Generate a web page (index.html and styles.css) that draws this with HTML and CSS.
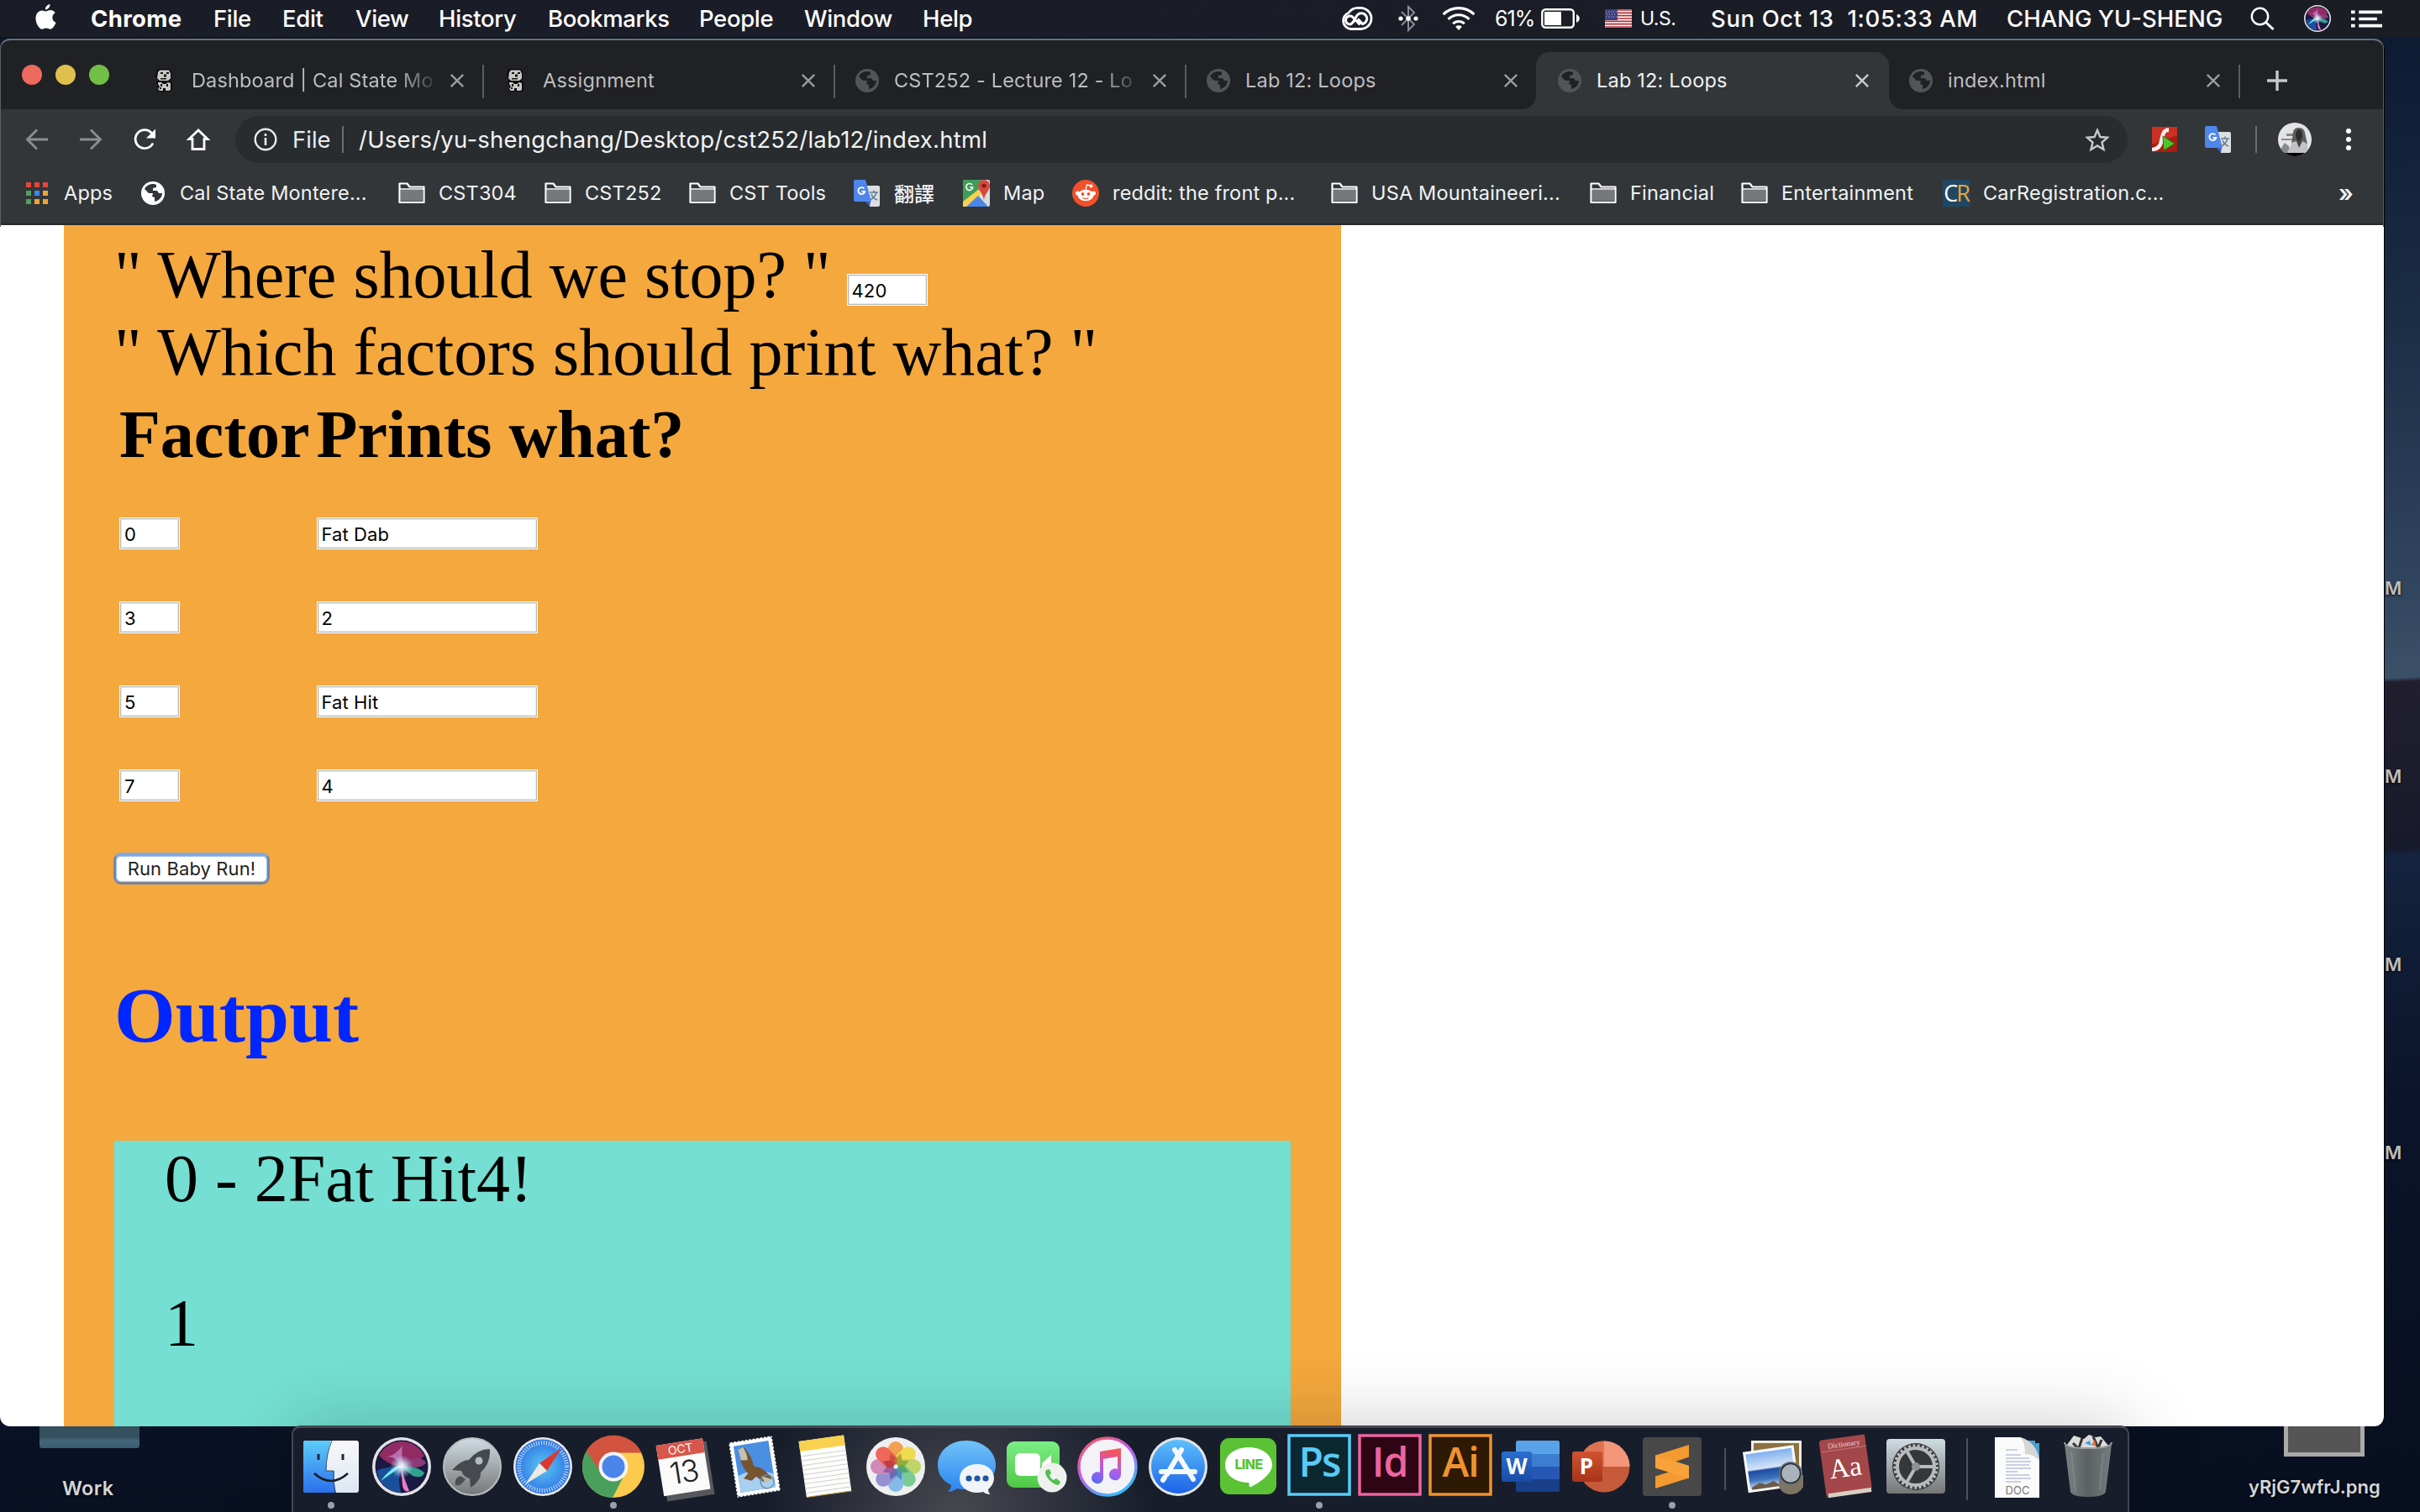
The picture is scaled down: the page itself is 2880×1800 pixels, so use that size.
FILE: index.html
```html
<!DOCTYPE html>
<html lang="en">
<head>
<meta charset="utf-8">
<title>Lab 12: Loops</title>
<link rel="stylesheet" href="styles.css">
</head>
<body>
<svg class="defs" width="0" height="0" aria-hidden="true">
  <defs>
    <symbol id="globe" viewBox="0 0 28 28"><circle cx="14" cy="14" r="14" fill="currentColor"/><path class="cut" d="M14 3C10 3 6 5 4 9l5 5h5l-1 4 3 1v5c5-1 9-5 9-10h-4l-2-3h-5V8l4-1V4c-1-1-3-1-4-1z"/></symbol>
    <symbol id="folder" viewBox="0 0 32 32"><path d="M1.500 27V4.500h9l3 4h17V27z" fill="none" stroke="#fff" stroke-width="2.200" stroke-linejoin="round"/><path d="M3 12h26.500v13.500H3z" fill="#77787a"/><path d="M1.500 11h29" stroke="#fff" stroke-width="1.500"/></symbol>
    <symbol id="translate" viewBox="0 0 32 32"><path d="M13 7h16a2 2 0 0 1 2 2v21a2 2 0 0 1-2 2H19z" fill="#dcdfe2"/><path d="M14 26h6l-1 6z" fill="#3b5bc0"/><path d="M2 0h12l7 26H2a2 2 0 0 1-2-2V2a2 2 0 0 1 2-2z" fill="#4f86ec"/><path d="M12.500 10.500a4 4 0 1 0 .8 3.500H9.500" fill="none" stroke="#fff" stroke-width="1.800"/><path d="M19 15h10M24 12.500V15M27 15c-1 4-4 7-7 9M21 17c1 3 4 6 7 7" fill="none" stroke="#607d8b" stroke-width="1.500"/></symbol>
    <symbol id="mascot" viewBox="0 0 28 28"><path d="M6 0h13l3 3v9l-2 2 3 2v9l-3 2H9l-4-2 1-4-2-5 2-3-3-4 1-6z" fill="#0a0a0a"/><path d="M8 1.500h11l2 4v6l-3 2.500H8L5 11l1-7zM6 16h4l2 2h3l3-2 3 1v8l-2 1h-4v-3h-3v3H8l-2-2 2-3-2-3z" fill="#c9c6c3"/><path d="M9 4h3v2H9zM16 4h3v2h-3zM13 6.500h3v3h-3zM9 11h7v1.500H9zM9 18h2v3H9zM16 18h2v3h-2zM8 22h2v2H8z" fill="#111"/></symbol>
    <symbol id="close" viewBox="0 0 20 20"><path d="M2 2l16 16M18 2L2 18" stroke="currentColor" stroke-width="2.600" fill="none"/></symbol>
    <linearGradient id="gBlue" x2="0" y2="1"><stop stop-color="#5cc0fb"/><stop offset="1" stop-color="#1c62e8"/></linearGradient>
    <linearGradient id="gBubble" x2="0" y2="1"><stop stop-color="#72c3f8"/><stop offset="1" stop-color="#2a84f0"/></linearGradient>
    <linearGradient id="gFinder" x2="0" y2="1"><stop stop-color="#5ccdfb"/><stop offset="1" stop-color="#2c70ea"/></linearGradient>
    <linearGradient id="gFace" x2="0" y2="1"><stop stop-color="#f8f8fa"/><stop offset="1" stop-color="#dde7f2"/></linearGradient>
    <linearGradient id="gGreen" x2="0" y2="1"><stop stop-color="#7bee85"/><stop offset="1" stop-color="#4fc846"/></linearGradient>
    <linearGradient id="gMetal" x2="0" y2="1"><stop stop-color="#cfdde3"/><stop offset="1" stop-color="#767676"/></linearGradient>
    <linearGradient id="gNote" x1=".2" x2="0" y2="1"><stop stop-color="#f4545c"/><stop offset=".5" stop-color="#b45bea"/><stop offset="1" stop-color="#4f6df5"/></linearGradient>
    <linearGradient id="gTunes" x1="0" y1="0" x2=".6" y2="1"><stop stop-color="#fb5b4e"/><stop offset=".5" stop-color="#c65ce8"/><stop offset="1" stop-color="#3fb8fb"/></linearGradient>
    <linearGradient id="gTrash"><stop stop-color="#7d8284"/><stop offset=".5" stop-color="#5b6063"/><stop offset="1" stop-color="#777c7f"/></linearGradient>
    <linearGradient id="gSea" x2="0" y2="1"><stop stop-color="#7fb0ef"/><stop offset=".45" stop-color="#d5e4f7"/><stop offset=".5" stop-color="#1f4ba0"/><stop offset=".75" stop-color="#3d74c0"/><stop offset="1" stop-color="#e3eaf0"/></linearGradient>
    <linearGradient id="gWord" x2="0" y2="1"><stop stop-color="#2a6fd0"/><stop offset="1" stop-color="#1a4ba4"/></linearGradient>
    <linearGradient id="gPpt" x2="0" y2="1"><stop stop-color="#d0532f"/><stop offset="1" stop-color="#a8341a"/></linearGradient>
    <radialGradient id="gSafari"><stop stop-color="#5cc8f0"/><stop offset="1" stop-color="#2f75e6"/></radialGradient>
    <radialGradient id="gGlow"><stop stop-color="#fff"/><stop offset=".4" stop-color="#d8f0ff" stop-opacity=".7"/><stop offset="1" stop-color="#8fd8ff" stop-opacity="0"/></radialGradient>
    <symbol id="siri" viewBox="0 0 70 70"><circle cx="35" cy="35" r="35" fill="#e4e2e6"/><circle cx="35" cy="35" r="31.500" fill="#191a42"/><path d="M8 22A30 30 0 0 1 62 22Q50 34 35 35Q20 34 8 22z" fill="#b0306c" opacity=".8"/><path d="M5 40Q10 64 34 66Q30 50 34 36Q18 34 5 40z" fill="#1b62b8" opacity=".75"/><path d="M35 34Q54 18 64 30Q60 38 35 36z" fill="#8d3a78"/><path d="M35 35Q54 34 62 42Q60 50 48 46z" fill="#36c3a0" opacity=".8"/><path d="M33 36L10 52Q22 36 33 33z" fill="#6cf0f2"/><path d="M34 34Q38 50 44 64Q38 66 36 58z" fill="#ef79c8"/><path d="M33 35Q28 20 15 24Q28 22 36 10Q34 24 38 32z" fill="#d59ae0" opacity=".6"/><circle cx="35" cy="35" r="14" fill="url(#gGlow)"/></symbol>
  </defs>
</svg>

<header class="menubar">
  <svg class="apple" viewBox="0 0 26 32"><path d="M18 1c.4 3-2.500 6.500-5.500 6.500C12 4.500 15 1.300 18 1zM13 9.500c1.500 0 3-1.500 5.500-1.500 2 0 4.300 1 5.700 3.200-5 3-4 9.800.9 11.600C23.500 27 21 30.700 18.300 30.700c-1.900 0-2.600-1.200-4.900-1.200s-3.100 1.200-4.900 1.200C5.200 30.700 1 24 1 18c0-6 3.800-9.500 7.500-9.500 2 0 3.300 1 4.500 1z" fill="#fff"/></svg>
  <nav class="menus"><b>Chrome</b><span>File</span><span>Edit</span><span>View</span><span>History</span><span>Bookmarks</span><span>People</span><span>Window</span><span>Help</span></nav>
  <div class="status">
    <svg class="cc" viewBox="0 0 38 28"><path d="M22 1.500a13 12.500 0 0 1 14.500 12.500A12.500 12.500 0 0 1 24 26.500H12A10 10 0 0 1 9.500 7.200A14 14 0 0 1 22 1.500z" fill="none" stroke="#fff" stroke-width="2.800"/><path d="M20.500 14.500l5.500 6a6.500 6.500 0 1 0-7-9.500c-3 6-5 10-8 10a5 5 0 1 1 3-9l9 9.500" fill="none" stroke="#fff" stroke-width="3"/></svg>
    <svg class="bt" viewBox="0 0 24 32"><path d="M4 8l15 15-7 7V2l7 7L4 24" fill="none" stroke="#8b8d93" stroke-width="2"/><circle cx="3" cy="16" r="2.600" fill="#fff"/><circle cx="12" cy="16" r="2.800" fill="#fff"/><circle cx="21" cy="16" r="2.600" fill="#fff"/></svg>
    <svg class="wifi" viewBox="0 0 42 30"><g fill="none" stroke="#fff" stroke-width="3.200"><path d="M2 10.500a27 27 0 0 1 38 0M8 16.500a18.500 18.500 0 0 1 26 0M14 22a10 10 0 0 1 14 0"/></g><path d="M21 30l-4-4.500a6 6 0 0 1 8 0z" fill="#fff"/></svg>
    <span class="pct">61%</span>
    <svg class="batt" viewBox="0 0 46 24"><rect x="1.300" y="1.300" width="37.500" height="21.400" rx="4" fill="none" stroke="#fff" stroke-width="2.400"/><rect x="4" y="4" width="20" height="16" fill="#fff"/><path d="M42 7c5 2 5 8 0 10z" fill="#fff"/></svg>
    <svg class="flag" viewBox="0 0 32 22"><path fill="#fff" d="M0 0h32v22H0z"/><path stroke="#b22c36" stroke-width="1.700" d="M0 1h32M0 4.300h32M0 7.700h32M0 11h32M0 14.300h32M0 17.700h32M0 21h32"/><path fill="#3c4180" d="M0 0h15v13H0z"/><path stroke="#b9bcd8" stroke-dasharray="1 2" d="M1 3h13M2 6h12M1 9h13"/></svg>
    <span class="us">U.S.</span>
    <span class="clock">Sun Oct 13&nbsp; 1:05:33 AM</span>
    <span class="user">CHANG YU-SHENG</span>
    <svg class="search" viewBox="0 0 30 28"><circle cx="11.500" cy="11.500" r="9.700" fill="none" stroke="#fff" stroke-width="2.400"/><path d="M18.500 18.500l9 8.500" stroke="#fff" stroke-width="3"/></svg>
    <svg class="siri-sm"><use href="#siri"/></svg>
    <svg class="list" viewBox="0 0 36 20"><path stroke="#fff" stroke-width="3.600" d="M0 2h4.500M9 2h27M0 10h4.500M9 10h21M0 18h4.500M9 18h27"/></svg>
  </div>
</header>

<span class="dm dm1">M</span><span class="dm dm2">M</span><span class="dm dm3">M</span><span class="dm dm4">M</span>
<div class="desk-folder"></div><span class="desk-label work">Work</span>
<div class="desk-thumb"></div><span class="desk-label png">yRjG7wfrJ.png</span>

<main class="window">
  <div class="tabstrip">
    <div class="lights"><i class="red"></i><i class="yellow"></i><i class="green"></i></div>
    <div class="tab"><svg class="fav"><use href="#mascot"/></svg><span class="fade">Dashboard | Cal State Mo</span><svg class="x"><use href="#close"/></svg></div>
    <div class="tab"><svg class="fav"><use href="#mascot"/></svg><span>Assignment</span><svg class="x"><use href="#close"/></svg></div>
    <div class="tab"><svg class="fav"><use href="#globe"/></svg><span class="fade">CST252 - Lecture 12 - Lo</span><svg class="x"><use href="#close"/></svg></div>
    <div class="tab nosep"><svg class="fav"><use href="#globe"/></svg><span>Lab 12: Loops</span><svg class="x"><use href="#close"/></svg></div>
    <div class="tab active"><svg class="fav"><use href="#globe"/></svg><span>Lab 12: Loops</span><svg class="x"><use href="#close"/></svg></div>
    <div class="tab"><svg class="fav"><use href="#globe"/></svg><span>index.html</span><svg class="x"><use href="#close"/></svg></div>
    <svg class="plus" viewBox="0 0 24 24"><path d="M12 0v24M0 12h24" stroke="#c6c8ca" stroke-width="3.400"/></svg>
  </div>
  <div class="toolbar">
    <svg viewBox="0 0 28 28" class="nav dim"><path d="M27 14H3M14 2.500L2.500 14 14 25.500"/></svg>
    <svg viewBox="0 0 28 28" class="nav dim"><path d="M1 14h24M14 2.500L25.500 14 14 25.500"/></svg>
    <svg viewBox="0 0 28 28" class="nav"><path d="M24 18.500A11 11 0 1 1 22.500 6.500"/><path d="M27 1.500v11H16z" class="solid"/></svg>
    <svg viewBox="0 0 28 28" class="nav"><path d="M14 3L3 13.500h4V25.500h14V13.500h4z"/></svg>
    <div class="omnibox">
      <svg class="info" viewBox="0 0 28 28"><circle cx="14" cy="14" r="12.300" fill="none" stroke="#e8eaed" stroke-width="2.400"/><path d="M14 12v9M14 7v3" stroke="#e8eaed" stroke-width="2.600"/></svg>
      <span class="scheme">File</span><i class="bar"></i><span class="url">/Users/yu-shengchang/Desktop/cst252/lab12/index.html</span>
      <svg class="star" viewBox="0 0 30 28"><path d="M15 3l3.400 8 8.600.8-6.500 5.700 2 8.500L15 21.500 7.500 26l2-8.500L3 11.800l8.600-.8z" fill="none" stroke="#c8cacc" stroke-width="2.400"/></svg>
    </div>
    <svg class="ext" viewBox="0 0 32 32"><rect x="1" y="1" width="30" height="30" rx="2" fill="#a81d14"/><path d="M1 1h30v10L1 22z" fill="#d8392b" opacity=".7"/><path d="M21 2c-9 1-9 8-11 15-1 6-4 8-9 9v4c10 0 12-6 14-13 1-7 2-10 6-10z" fill="#f6eeee"/><path d="M14 12l14 9-13 8z" fill="#4fc52a" stroke="#1e7a0c"/></svg>
    <svg class="ext tr"><use href="#translate"/></svg>
    <i class="bar tb"></i>
    <svg class="avatar" viewBox="0 0 40 40"><clipPath id="av"><circle cx="20" cy="20" r="20"/></clipPath><g clip-path="url(#av)"><path fill="#e4e4e6" d="M0 0h40v40H0z"/><path fill="#8a8a8c" d="M4 19h14v2H4zM10 13h8v3h-8zM0 36l8-12 5 4 2 12H0z"/><path fill="#5e5d5f" d="M18 11q1-5 7-5t7 6l3 14-4-3H18l-2 2z"/><ellipse cx="25" cy="15" rx="4" ry="7" fill="#2f2d2e"/><path d="M10 37l8-14 5-1 3 4 3-4 5 3 4 13z" fill="#c2c2c4"/><path d="M22 22l3 8 4-8z" fill="#444"/><path d="M0 36h40v4H0z" fill="#000"/></g></svg>
    <svg class="dots" viewBox="0 0 6 26"><g fill="#fff"><circle cx="3" cy="3" r="3"/><circle cx="3" cy="13" r="3"/><circle cx="3" cy="23" r="3"/></g></svg>
  </div>
  <div class="bookmarks">
    <a><svg viewBox="0 0 32 32"><g fill="#e5473b"><path d="M3 3h6v6H3zM13 3h6v6h-6zM23 3h6v6h-6z"/></g><path d="M3 13h6v6H3zM3 23h6v6H3z" fill="#4fa060"/><path d="M13 13h6v6h-6z" fill="#3f86f0"/><path d="M23 13h6v6h-6zM13 23h6v6h-6zM23 23h6v6h-6z" fill="#eda634"/></svg>Apps</a>
    <a><svg viewBox="-2 -2 32 32"><circle cx="14" cy="14" r="14" fill="#fff"/><path fill="#323639" d="M14 3C10 3 6 5 4 9l5 5h5l-1 4 3 1v5c5-1 9-5 9-10h-4l-2-3h-5V8l4-1V4c-1-1-3-1-4-1z"/></svg>Cal State Montere...</a>
    <a><svg><use href="#folder"/></svg>CST304</a>
    <a><svg><use href="#folder"/></svg>CST252</a>
    <a><svg><use href="#folder"/></svg>CST Tools</a>
    <a><svg><use href="#translate"/></svg><span class="cjk">翻譯</span></a>
    <a><svg viewBox="0 0 32 32"><rect width="32" height="32" rx="2" fill="#dadbdc"/><path d="M0 2a2 2 0 0 1 2-2h20L18 14 0 30z" fill="#3f9d5a"/><path d="M0 26l18-14 4 5L4 32H0z" fill="#fbd14b"/><path d="M4 32l14-13 12 13z" fill="#4b86ec"/><path d="M25 24C24 16 18 13 18 7a7 7 0 0 1 14 0c0 6-6 9-7 17z" fill="#d8483a"/><circle cx="25" cy="7" r="2.600" fill="#7a211a"/><path d="M11 6a4 4 0 1 0 .8 3H8" fill="none" stroke="#fff" stroke-width="1.600"/></svg>Map</a>
    <a><svg viewBox="0 0 32 32"><circle cx="16" cy="16" r="16" fill="#f1512a"/><ellipse cx="16" cy="18.500" rx="9.500" ry="6.700" fill="#fff"/><circle cx="6.500" cy="16" r="2.500" fill="#fff"/><circle cx="25.500" cy="16" r="2.500" fill="#fff"/><path d="M16 12l1.500-6 5 1" stroke="#fff" stroke-width="1.300" fill="none"/><circle cx="22.500" cy="7.500" r="2" fill="#fff"/><circle cx="12.500" cy="17" r="1.900" fill="#f1512a"/><circle cx="19.500" cy="17" r="1.900" fill="#f1512a"/><path d="M12.500 21.500q3.500 2.500 7 0" stroke="#f1512a" stroke-width="1.200" fill="none"/></svg>reddit: the front p...</a>
    <a><svg><use href="#folder"/></svg>USA Mountaineeri...</a>
    <a><svg><use href="#folder"/></svg>Financial</a>
    <a><svg><use href="#folder"/></svg>Entertainment</a>
    <a><span class="cr">C<em>R</em></span>CarRegistration.c...</a>
    <a class="more">»</a>
  </div>
  <section class="viewport">
    <div class="lab">
      <div class="line">" Where should we stop? " <span class="field stop">420</span></div>
      <div class="line">" Which factors should print what? "</div>
      <table>
        <tr><th>Factor</th><th>Prints what?</th></tr>
        <tr><td><span class="field num">0</span></td><td><span class="field word">Fat Dab</span></td></tr>
        <tr><td><span class="field num">3</span></td><td><span class="field word">2</span></td></tr>
        <tr><td><span class="field num">5</span></td><td><span class="field word">Fat Hit</span></td></tr>
        <tr><td><span class="field num">7</span></td><td><span class="field word">4</span></td></tr>
      </table>
      <div class="line"><button>Run Baby Run!</button></div>
      <h3>Output</h3>
      <div class="out"><p>0 - 2Fat Hit4!</p><p>1</p></div>
    </div>
  </section>
</main>

<footer class="dock">
  <svg viewBox="0 0 84 100"><rect x="9" y="15" width="66" height="62" rx="3" fill="url(#gFace)"/><path d="M12 15h30q-6 16-6 36h10q-1 14 2 26H12a3 3 0 0 1-3-3V18a3 3 0 0 1 3-3z" fill="url(#gFinder)"/><path d="M43 15q-7 16-7 36h9q-1 14 2 26" fill="none" stroke="#394b63" stroke-width="1"/><path d="M27 31v7M56 31v7" stroke="#1c2836" stroke-width="3"/><path d="M22 54q20 18 40 0" fill="none" stroke="#1c1c22" stroke-width="2.500"/><circle cx="42" cy="92" r="4"/></svg>
  <svg viewBox="0 0 84 100"><use href="#siri" x="7" y="11" width="70" height="70"/></svg>
  <svg viewBox="0 0 84 100"><circle cx="42" cy="46" r="34" fill="url(#gMetal)" stroke="#b9bec1" stroke-width="2"/><path d="M63 25Q48 25 38 38Q29 38 18 50l11 1q3 8 10 9l1 11q13-9 12-18Q64 42 63 25z" fill="#46494d"/><circle cx="50" cy="39" r="4.500" fill="#b5bdc1"/><path d="M28 57q-8 3-6 11q6 2 12-7z" fill="#4c4e50"/></svg>
  <svg viewBox="0 0 84 100"><circle cx="42" cy="46" r="35" fill="#ecebe9"/><circle cx="42" cy="46" r="32.500" fill="url(#gSafari)"/><circle cx="42" cy="46" r="28.500" fill="none" stroke="#cfe7fb" stroke-width="5" stroke-dasharray="1 2"/><path d="M64 24L47 51l-9-9z" fill="#dc3830"/><path d="M21 67l17-25 9 9z" fill="#ece9e7"/></svg>
  <svg viewBox="0 0 84 100"><circle cx="42" cy="46" r="37" fill="#fccb4e"/><path d="M42 46L10 27.500A37 37 0 0 0 41 83L54 58z" fill="#49a05c"/><path d="M10 27.500A37 37 0 0 1 75.500 29.500H42L30 58z" fill="#d2533f"/><circle cx="42" cy="46" r="17.500" fill="#f3f4f5"/><circle cx="42" cy="46" r="13.500" fill="#4b85ec"/><circle cx="42" cy="92" r="4"/></svg>
  <svg viewBox="0 0 84 100"><g transform="rotate(-9 42 46)"><path d="M16 20h57v64H16z" fill="#55585c"/><path d="M13 16h56v61H13z" fill="#fafafa"/><path d="M13 16h56v17H13z" fill="#d9564b"/><text x="41" y="29.500" class="oct">OCT</text><text x="41" y="65" class="day">13</text></g></svg>
  <svg viewBox="0 0 84 100"><g transform="rotate(-9 42 46)"><rect x="16" y="13" width="52" height="66" fill="#fff"/><rect x="16" y="13" width="52" height="66" fill="none" stroke="#171c2a" stroke-width="2" stroke-dasharray="1.500 3"/><path d="M21 18h42v56H21z" fill="#4a8fe2"/><path d="M21 54q20-8 42 4v16H21z" fill="#a9cff0"/><path d="M27 22l6-1q8 12 8 24l8 4q10 9 11 15l-10 2-8-8-6 4-9-4 6-5Q24 40 27 22z" fill="#76542f"/><path d="M26 23l6-2q4 10 3 16l-8-1zM48 58l12 6-9 3z" fill="#c5bfb4"/><circle cx="54" cy="66" r="8" fill="none" stroke="#6a8fb5" stroke-width="1.500"/></g></svg>
  <svg viewBox="0 0 84 100"><g transform="rotate(-8 42 46)"><path d="M15 12h54v67H15z" fill="#fdfdfb"/><path d="M15 12h54v12H15z" fill="#fad04f"/><path d="M15 30h54M15 35.500h54M15 41h54M15 46.500h54M15 52h54M15 57.500h54M15 63h54M15 68.500h54M15 74h54" stroke="#cfcfcf" stroke-width="1"/><path d="M15 79h54" stroke="#bb923b"/></g></svg>
  <svg viewBox="0 0 84 100"><circle cx="42" cy="46" r="35" fill="#efeff0"/><g opacity=".88"><rect x="33" y="16" width="18" height="29" rx="9" fill="#f3963a"/><rect x="33" y="16" width="18" height="29" rx="9" fill="#efd93b" transform="rotate(45 42 46)"/><rect x="33" y="16" width="18" height="29" rx="9" fill="#b9d257" transform="rotate(90 42 46)"/><rect x="33" y="16" width="18" height="29" rx="9" fill="#6cc487" transform="rotate(135 42 46)"/><rect x="33" y="16" width="18" height="29" rx="9" fill="#75b3e6" transform="rotate(180 42 46)"/><rect x="33" y="16" width="18" height="29" rx="9" fill="#8a84cf" transform="rotate(225 42 46)"/><rect x="33" y="16" width="18" height="29" rx="9" fill="#cc7bb2" transform="rotate(270 42 46)"/><rect x="33" y="16" width="18" height="29" rx="9" fill="#ee5547" transform="rotate(315 42 46)"/></g><g opacity=".6"><path d="M42 46l-5-8 5-9 5 9z" fill="#c0392b" transform="rotate(-22 42 46)"/><path d="M42 46l-5-8 5-9 5 9z" fill="#9a7a20" transform="rotate(22 42 46)"/><path d="M42 46l-5-8 5-9 5 9z" fill="#7d8f20" transform="rotate(67 42 46)"/><path d="M42 46l-5-8 5-9 5 9z" fill="#3f8f4a" transform="rotate(112 42 46)"/><path d="M42 46l-5-8 5-9 5 9z" fill="#2b7d8a" transform="rotate(157 42 46)"/><path d="M42 46l-5-8 5-9 5 9z" fill="#4455a8" transform="rotate(202 42 46)"/><path d="M42 46l-5-8 5-9 5 9z" fill="#7a458f" transform="rotate(247 42 46)"/><path d="M42 46l-5-8 5-9 5 9z" fill="#9c2440" transform="rotate(292 42 46)"/></g><circle cx="42" cy="46" r="2.500" fill="#fff"/></svg>
  <svg viewBox="0 0 84 100"><path d="M42 15c20 0 35 13 35 29S62 73 42 73c-4 0-8 0-11-1q-5 4-11 4q4-4 4-8Q8 60 8 44C8 28 22 15 42 15z" fill="url(#gBubble)"/><path d="M55 43c12 0 20 7 20 17q0 7-7 13q0 4 3 6q-6 0-9-3q-3 1-7 1c-12 0-21-7-21-17s9-17 21-17z" fill="#f1f4f8"/><g fill="#1f56a5"><circle cx="45" cy="60" r="3.600"/><circle cx="55" cy="60" r="3.600"/><circle cx="65" cy="60" r="3.600"/></g></svg>
  <svg viewBox="0 0 84 100"><rect x="6" y="16" width="63" height="55" rx="9" fill="url(#gGreen)"/><rect x="16" y="30" width="30" height="27" rx="6" fill="#fff"/><path d="M48 42l11-10v24L48 47z" fill="#fff"/><circle cx="60" cy="59" r="17.500" fill="#eff1ef"/><path d="M53 50q-3 4 3 11t12 7l2-4-5-4-3 2q-4-2-5-6l2-2-2-5z" fill="#4fc04f"/></svg>
  <svg viewBox="0 0 84 100"><circle cx="42" cy="46" r="34" fill="#f3f2f7" stroke="url(#gTunes)" stroke-width="3.500"/><path d="M33 28l25-4v31a7 7 0 1 1-4-6V34l-17 3v22a7 7 0 1 1-4-6z" fill="url(#gNote)"/></svg>
  <svg viewBox="0 0 84 100"><circle cx="42" cy="46" r="35" fill="#e4e5e8"/><circle cx="42" cy="46" r="32" fill="url(#gBlue)"/><g stroke="#f6f9fc" stroke-width="6" stroke-linecap="round" fill="none"><path d="M46 26L29 55M38 26l22 35M22 52h40M26 59l-2 3"/></g></svg>
  <svg viewBox="0 0 84 100"><rect x="8" y="12" width="67" height="67" rx="11" fill="#5bc236"/><path d="M42 23c16 0 28 9 28 21 0 10-13 20-25 26-3 1-2-3-3-5-16 0-28-9-28-21s12-21 28-21z" fill="#fff"/><text x="42" y="48.500" class="linet">LINE</text></svg>
  <svg viewBox="0 0 84 100"><rect x="6" y="9" width="72" height="70" fill="#0b2730" stroke="#58cbf7" stroke-width="3.500"/><text x="42" y="58" class="adobe ps">Ps</text><circle cx="42" cy="92" r="4"/></svg>
  <svg viewBox="0 0 84 100"><rect x="6" y="9" width="72" height="70" fill="#2d0513" stroke="#ee63a0" stroke-width="3.500"/><text x="42" y="58" class="adobe id">Id</text></svg>
  <svg viewBox="0 0 84 100"><rect x="6" y="9" width="72" height="70" fill="#2e1905" stroke="#f0922e" stroke-width="3.500"/><text x="42" y="58" class="adobe ai">Ai</text></svg>
  <svg viewBox="0 0 84 100"><rect x="24" y="15" width="52" height="61" rx="3" fill="#2657b5"/><path d="M27 15h46a3 3 0 0 1 3 3v13H24V18a3 3 0 0 1 3-3z" fill="#58a3e8"/><path d="M24 31h52v15H24z" fill="#3c7dd0"/><path d="M24 61h52v12a3 3 0 0 1-3 3H27a3 3 0 0 1-3-3z" fill="#193f89"/><rect x="7" y="28" width="36" height="36" rx="3" fill="url(#gWord)"/><text x="25" y="55" class="office">W</text></svg>
  <svg viewBox="0 0 84 100"><circle cx="45" cy="46" r="30.500" fill="#c65a3b"/><path d="M45 15.500A30.500 30.500 0 0 1 75.500 46H45z" fill="#f3967a"/><path d="M45 15.500A30.500 30.500 0 0 0 14.500 46H45z" fill="#de7352"/><rect x="7" y="28" width="36" height="36" rx="3" fill="url(#gPpt)"/><text x="24" y="55" class="office">P</text></svg>
  <svg viewBox="0 0 84 100"><rect x="7" y="11" width="70" height="70" rx="4" fill="#484848"/><path d="M62 20L22 32.500v15L62 60V45L46 40l16-5.500zM62 45L22 57.500V72l40-12.500z" fill="#f39a31"/><path d="M22 32.500v15L62 60V45z" fill="#f7a23a"/><circle cx="42" cy="92" r="4"/></svg>
  <i class="sep s1"></i>
  <svg viewBox="0 0 84 100"><path d="M14 15h60v50H14z" fill="#f0ece2"/><path d="M17 18h54v40H17z" fill="#8d7142"/><g transform="rotate(-8 40 48)"><path d="M7 24h61v49H7z" fill="#fafafa"/><path d="M10 27h55v43H10z" fill="url(#gSea)"/><path d="M12 67l10-4 7 3 10-3 8 7H12z" fill="#6d5b49"/></g><path d="M47 56v14q4 9 14 9t15-9V56z" fill="#7d7464"/><circle cx="61" cy="54" r="14" fill="#6c7177"/><circle cx="61" cy="54" r="11.500" fill="#a9b2bd" stroke="#24272b" stroke-width="1.500"/></svg>
  <svg viewBox="0 0 84 100"><g transform="rotate(-8 42 46)"><path d="M17 15h52v65H17z" fill="#d8cfc4"/><path d="M17 11h53v64H17l-2 6V14z" fill="#a3474b"/><path d="M17 25h53" stroke="#c77" stroke-width="1"/><text x="44" y="22" class="dict">Dictionary</text><text x="42" y="58" class="aa">Aa</text></g></svg>
  <svg viewBox="0 0 84 100"><rect x="7" y="13" width="70" height="65" rx="4" fill="url(#gMetal)"/><circle cx="42" cy="46" r="28" fill="#353739"/><circle cx="42" cy="46" r="22" fill="none" stroke="#b8babb" stroke-width="4"/><circle cx="42" cy="46" r="25" fill="none" stroke="#b8babb" stroke-width="3.500" stroke-dasharray="3 2.400"/><path d="M42 46h22M42 46L31 27M42 46L31 65" stroke="#b8babb" stroke-width="4"/><circle cx="42" cy="46" r="5" fill="#8e9092"/></svg>
  <i class="sep s2"></i>
  <svg viewBox="0 0 84 100"><path d="M18 15h45v15H18z" fill="#4ba0cc"/><path d="M63 18h5v30h-5z" fill="#4ba0cc"/><path d="M15 11h30q20 6 23 28v44H15z" fill="#fbfbfb"/><path d="M45 11q6 4 6 20q10 0 17 8Q64 16 45 11z" fill="#d5d5d5"/><path d="M28 26h14M28 32h18M28 36h28M28 40h30M28 44h28M28 48h30M28 52h14M28 56h28M28 60h30M28 64h18" stroke="#9aa6c8" stroke-width="1.200"/><text x="42" y="79" class="doc">DOC</text></svg>
  <svg viewBox="0 0 84 100"><path d="M17 20l8-11 12 4 6-5 8 3 6-1 10 12-6 8H22z" fill="#dcdcdc"/><path d="M24 18l8 8M48 10l6 14M35 12l-4 12M58 14l-4 10" stroke="#333" stroke-width="3"/><path d="M38 18l6-3 2 6z" fill="#35a3d8"/><path d="M46 20l4-6 2 8z" fill="#e06b3c"/><path d="M14 19q28 12 56 0L63 76q-2 6-21 6t-21-6z" fill="url(#gTrash)"/><path d="M14 17q0 7 28 7t28-7" fill="none" stroke="#9b9ea0" stroke-width="2"/><path d="M22 28l5 48M60 30l-4 44" stroke="#8f9395" stroke-width="2" opacity=".5"/></svg>
</footer>
</body>
</html>
```
FILE: styles.css
```css
* { box-sizing: border-box; }
html, body { margin: 0; width: 2880px; height: 1800px; overflow: hidden; }
body {
  position: relative;
  font-family: Inter, "Noto Sans CJK TC", sans-serif;
  background: linear-gradient(177deg, #0b1528 0, #0d1b33 200px, #1b2c45 520px, #33465f 860px, #3c5068 955px, #211f2e 960px, #171a2b 1158px, #14233e 1166px, #0b142a 1450px, #080f20 1900px);
}
svg { display: block; flex: none; overflow: visible; }
.defs { position: absolute; }

.menubar { display: flex; align-items: center; height: 44px; padding-left: 41px; background: linear-gradient(90deg, #1a1d26, #1a1c28 40%, #1b1d24); color: #fff; font-size: 27.500px; line-height: 44px; white-space: nowrap; }
.apple { width: 27px; height: 32px; margin-top: -4px; }
.menus { display: grid; grid-template-columns: 146px 82px 87px 99px 130px 180px 125px 141px 70px; margin-left: 40px; font-weight: 500; letter-spacing: -.35px; }
.menus b { font-weight: 700; letter-spacing: .35px; }
.status { display: grid; grid-template-columns: 69px 51px 64px 55px 76px 42px 84px 352px 290px 64px 56px 36px; align-items: center; margin-left: 427px; font-weight: 500; }
.clock { letter-spacing: .62px; }
.user { letter-spacing: 0; }
.cc { width: 39px; height: 28px; }
.bt { width: 24px; height: 32px; }
.wifi { width: 42px; height: 29px; margin-top: -2px; }
.pct { font-size: 25px; font-weight: 400; letter-spacing: -1px; }
.batt { width: 46px; height: 24px; }
.flag { width: 32px; height: 22px; }
.us { font-size: 23px; font-weight: 400; letter-spacing: -.5px; }
.search { width: 30px; height: 28px; }
.siri-sm { width: 32px; height: 32px; }
.list { width: 37px; height: 21px; }

.dm, .desk-label { position: absolute; color: #d6d6d6; font-size: 22px; font-weight: 600; line-height: 28px; text-shadow: 0 1px 3px #000; }
.dm { left: 2838px; color: #bdbdbd; }
.dm1 { top: 686px; } .dm2 { top: 910px; } .dm3 { top: 1134px; } .dm4 { top: 1358px; }
.desk-label.work { left: 74px; top: 1758px; font-size: 23.500px; letter-spacing: .3px; }
.png { left: 2676px; top: 1756px; }
.desk-folder { position: absolute; left: 47px; top: 1690px; width: 119px; height: 34px; border-radius: 3px; background: linear-gradient(#35505f 60%, #43667a 75%, #3a5b6e); }
.desk-thumb { position: absolute; left: 2718px; top: 1690px; width: 96px; height: 44px; background: #555; border: 5px solid #a9a9a9; }

.window { position: absolute; left: 0; top: 46px; width: 2838px; height: 1652px; overflow: hidden; border-radius: 12px; background: #fff; border-right: 1px solid #000; }
.window::after { content: ""; position: absolute; inset: 0 0 auto 0; height: 222px; border: 1px solid #5d6062; border-top: 2px solid #6c6f71; border-bottom: 0; border-radius: 12px 12px 0 0; }
.tabstrip { display: flex; height: 84px; padding-top: 16px; background: #202124; }
.lights { display: flex; gap: 16px; width: 158px; padding: 15px 0 0 26px; }
.lights i { width: 24px; height: 24px; border-radius: 50%; }
.red { background: #ed6a5e; } .yellow { background: #e0c04c; } .green { background: #72be47; }
.tab { position: relative; display: flex; align-items: center; width: 418px; height: 68px; padding-left: 24px; color: #bdbec0; font-size: 23.500px; letter-spacing: .2px; white-space: nowrap; }
.tab span { width: 290px; margin-left: 18px; line-height: 34px; }
.tab::before { content: ""; position: absolute; right: 0; top: 15px; width: 2px; height: 40px; background: #5b5c5f; }
.tab .fade { letter-spacing: .15px; -webkit-mask-image: linear-gradient(90deg, #000 245px, transparent 296px); mask-image: linear-gradient(90deg, #000 245px, transparent 296px); }
.nosep::before, .active::before { display: none; }
.fav { width: 28px; height: 28px; color: #515559; }
.cut { fill: #202124; }
.active .cut { fill: #323639; }
.x { width: 18px; height: 18px; margin-left: 17px; color: #9b9c9e; }
.active { width: 420px; margin: 0 0 0 -2px; padding-left: 26px; border-radius: 16px 16px 0 0; background: #323639; color: #f1f3f4; z-index: 1; }
.active::before, .active::after { content: ""; display: block; position: absolute; bottom: 0; top: auto; width: 16px; height: 16px; background: radial-gradient(circle at 0 0, transparent 15.500px, #323639 16px); }
.active::before { left: -16px; right: auto; }
.active::after { right: -16px; background: radial-gradient(circle at 100% 0, transparent 15.500px, #323639 16px); }
.active .x { color: #c8c9ca; }
.plus { width: 24px; height: 24px; margin: 22px 0 0 32px; }

.toolbar { display: flex; align-items: center; height: 72px; padding-left: 30px; background: #323639; }
.nav { width: 28px; height: 28px; margin-right: 36px; fill: none; stroke: #fff; stroke-width: 2.800; }
.nav.dim { stroke: #8b8d8f; }
.nav .solid { fill: #fff; stroke: none; }
.omnibox { display: flex; align-items: center; width: 2252px; height: 56px; margin-left: -6px; padding-left: 22px; border-radius: 28px; background: #282c2f; color: #e8eaed; font-size: 27.500px; line-height: 40px; white-space: nowrap; }
.info { width: 28px; height: 28px; }
.scheme { width: 59px; margin-left: 18px; letter-spacing: 0; }
.bar { width: 2px; height: 32px; background: #6b6e70; }
.url { width: 2054px; margin-left: 18px; letter-spacing: .23px; color: #f1f3f4; }
.star { width: 30px; height: 28px; }
.ext { width: 32px; height: 32px; margin-left: 28px; }
.ext.tr { margin-left: 32px; }
.bar.tb { margin-left: 28px; }
.avatar { width: 40px; height: 40px; margin-left: 25px; }
.dots { width: 6px; height: 26px; margin-left: 41px; }

.bookmarks { display: grid; grid-template-columns: 138px 308px 174px 172px 196px 130px 130px 308px 308px 180px 240px 471px 40px; height: 66px; padding: 0 0 8px 28px; align-items: center; background: #323639; color: #f1f3f4; font-size: 23.500px; letter-spacing: .17px; white-space: nowrap; border-bottom: 2px solid #28292b; }
.bookmarks a { display: flex; align-items: center; line-height: 32px; }
.bookmarks svg { width: 32px; height: 32px; margin-right: 16px; }
.cjk { font-family: "Noto Sans CJK TC", sans-serif; font-size: 24px; letter-spacing: 0; font-weight: 500; }
.cr { width: 32px; height: 32px; margin-right: 16px; background: #1f4763; color: #fff; font-family: "Open Sans", sans-serif; font-size: 27px; letter-spacing: -2px; text-align: center; line-height: 32px; }
.cr em { font-style: normal; color: #f0a32c; }
.more { font-size: 28px; font-weight: 600; }

.viewport { height: 1430px; padding-left: 76px; overflow: hidden; }
.lab { width: 1520px; height: 1600px; padding: 13px 60px 0; background: #f4a83d; color: #000; font: 80px/92px "Liberation Serif", serif; white-space: nowrap; }
.line { height: 92px; }
table { border-spacing: 4px; border-collapse: separate; }
th, td { height: 96px; padding: 2px; text-align: left; line-height: 92px; }
.field { display: inline-block; height: 38px; padding: 1px 0 0 5px; border: 1px solid #fff; background: #fff; box-shadow: inset 0 0 0 1px #b9b9b9, inset 0 0 0 2px #e9e9e9; font: 22px/36px Inter, sans-serif; letter-spacing: .1px; vertical-align: baseline; }
.stop { width: 96px; margin-left: -1px; }
.num { width: 72px; }
.word { width: 263px; }
button { display: inline-block; width: 186px; height: 38px; margin: 0 0 0 -1px; padding: 0; border: 3px solid #7187ad; border-top: 4px solid #80a8e4; border-bottom-color: #7e8294; border-radius: 9px; background: #fff; color: #222; box-shadow: inset 0 0 1px 1px #9dbdf0; font: 22px/29px Inter, sans-serif; letter-spacing: .1px; vertical-align: baseline; }
h3 { height: 108px; margin: 94px 0 95px; color: #0026ff; font-size: 93.600px; line-height: 108px; }
.out { height: 500px; padding-left: 60px; background: #74dfd2; }
.out p { position: relative; top: -1px; margin: 0 0 80px; }

.dock { position: absolute; left: 347px; top: 1697px; width: 2187px; height: 110px; display: flex; padding-left: 3px; border: 2px solid #444750; border-top-width: 3px; border-radius: 10px 10px 0 0; background: radial-gradient(ellipse 230px 200px at 790px 100px, #46484f, transparent), #181d2b; box-shadow: 0 0 90px rgba(0, 0, 0, .2); }
.dock svg { width: 84px; height: 100px; fill: #9a9fae; }
.sep { width: 2px; background: #4b505c; }
.s1 { height: 50px; margin: 24px 16px 0 20px; }
.s2 { height: 74px; margin: 12px 17px 0 18px; }
.dock text { text-anchor: middle; font-family: Inter, sans-serif; }
.dock .oct { fill: #fff; font-size: 14px; }
.dock .day { fill: #222; font-size: 36px; font-weight: 300; letter-spacing: -1px; }
.dock .linet { fill: #5bc236; font-size: 16px; font-weight: 800; letter-spacing: -.6px; }
.dock .adobe { font-family: "Open Sans", sans-serif; font-size: 48px; font-weight: 600; letter-spacing: -1px; }
.dock .ps { fill: #58cbf7; letter-spacing: -2px; }
.dock .id { fill: #ee63a0; }
.dock .ai { fill: #f0922e; }
.dock .office { fill: #fff; font-family: "Open Sans", sans-serif; font-size: 26px; font-weight: 700; }
.dock .dict { fill: #ecd9d3; font-family: "Liberation Serif", serif; font-size: 9px; }
.dock .aa { fill: #fff; font-family: "Liberation Serif", serif; font-size: 33px; }
.dock .doc { fill: #777; font-size: 13px; }
```
